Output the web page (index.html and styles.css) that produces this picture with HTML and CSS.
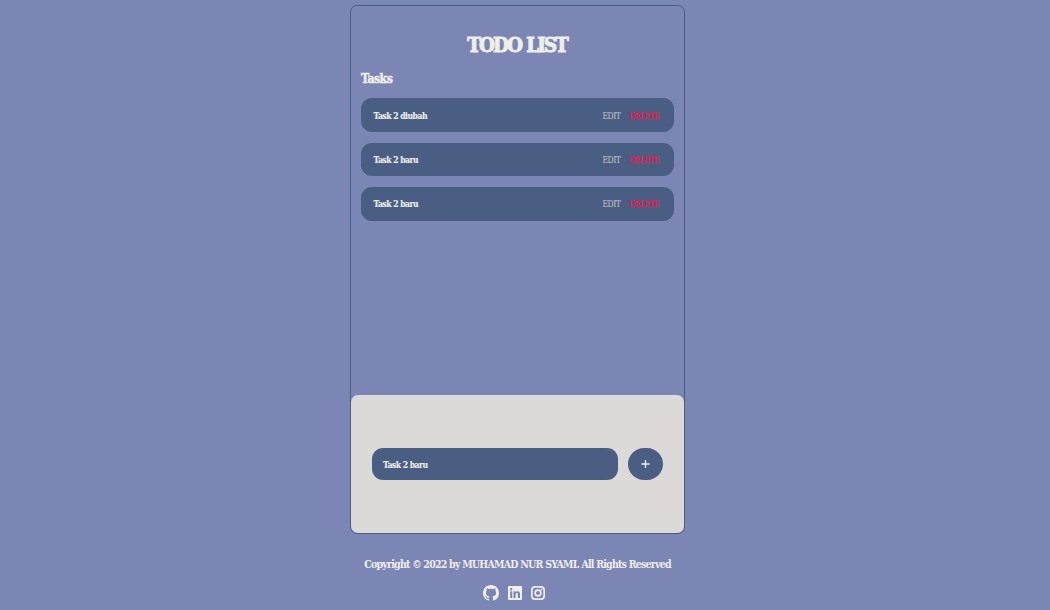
FILE: index.html
```html
<!DOCTYPE html>
<html lang="en">
<head>
<meta charset="utf-8">
<title>Todo List</title>
<link rel="stylesheet" href="styles.css">
</head>
<body>
<main class="app">
  <section class="content">
    <h1 class="title">TODO LIST</h1>
    <h2 class="subtitle">Tasks</h2>
    <ul class="tasks">
      <li class="task"><span class="name">Task 2 diubah</span><span class="edit">EDIT</span><span class="delete">DELETE</span></li>
      <li class="task"><span class="name">Task 2 baru</span><span class="edit">EDIT</span><span class="delete">DELETE</span></li>
      <li class="task"><span class="name">Task 2 baru</span><span class="edit">EDIT</span><span class="delete">DELETE</span></li>
    </ul>
  </section>
  <form class="panel">
    <div class="field"><span class="name">Task 2 baru</span></div>
    <button class="add" type="button" aria-label="Add task"><svg width="9" height="9" viewBox="0 0 9 9"><path d="M0.500 4h8M4.500 0v8" stroke="#efeee9" stroke-width="1.300"/></svg></button>
  </form>
</main>
<footer class="footer">
  <p class="copyright">Copyright © 2022 by MUHAMAD NUR SYAMI. All Rights Reserved</p>
  <div class="social">
    <svg class="github" viewBox="0 0 16 16"><path d="M8 0C3.58 0 0 3.58 0 8c0 3.54 2.29 6.53 5.47 7.59.4.07.55-.17.55-.38 0-.19-.01-.82-.01-1.49-2.01.37-2.53-.49-2.69-.94-.09-.23-.48-.94-.82-1.13-.28-.15-.68-.52-.01-.53.63-.01 1.08.58 1.23.82.72 1.21 1.87.87 2.33.66.07-.52.28-.87.51-1.07-1.78-.2-3.64-.89-3.64-3.95 0-.87.31-1.59.82-2.15-.08-.2-.36-1.02.08-2.12 0 0 .67-.21 2.2.82.64-.18 1.32-.27 2-.27s1.36.09 2 .27c1.53-1.04 2.2-.82 2.2-.82.44 1.1.16 1.92.08 2.12.51.56.82 1.27.82 2.15 0 3.07-1.87 3.75-3.65 3.95.29.25.54.73.54 1.48 0 1.07-.01 1.93-.01 2.2 0 .21.15.46.55.38A8.01 8.01 0 0 0 16 8c0-4.42-3.58-8-8-8z"/></svg>
    <svg class="linkedin" viewBox="0 0 448 448"><path d="M416 0H31.900C14.300 0 0 14.500 0 32.300v383.400C0 433.500 14.300 448 31.900 448H416c17.600 0 32-14.500 32-32.300V32.300C448 14.500 433.600 0 416 0zM135.400 384H69V170.200h66.500V384zm-33.200-243c-21.300 0-38.500-17.300-38.500-38.500S80.900 64 102.200 64c21.200 0 38.500 17.300 38.500 38.500 0 21.300-17.200 38.500-38.500 38.500zm282.100 243h-66.400V280c0-24.800-.5-56.700-34.500-56.700-34.600 0-39.900 27-39.900 54.900V384h-66.400V170.200h63.700v29.200h.9c8.900-16.800 30.600-34.500 62.900-34.500 67.200 0 79.700 44.300 79.700 101.900V384z"/></svg>
    <svg class="instagram" viewBox="0 0 24 24"><g fill="none" stroke="#efeee9" stroke-width="2.900"><rect x="1.450" y="1.450" width="21.100" height="21.100" rx="5.500"/><circle cx="12" cy="12" r="4.900"/></g><circle cx="18.300" cy="5.700" r="1.600"/></svg>
  </div>
</footer>
</body>
</html>
```
FILE: styles.css
```css
* { box-sizing: border-box; }
html { background: #7b86b5; }
body {
  margin: 0;
  width: 1035px;
  height: 610px;
  overflow: hidden;
  padding-top: 5px;
  background: #7b86b5;
  color: #efeee9;
  font-family: "DejaVu Serif Condensed", "DejaVu Serif", serif;
  font-weight: bold;
}
h1, h2, p, ul { margin: 0; padding: 0; }
.app {
  display: flex;
  flex-direction: column;
  width: 335px;
  height: 529px;
  margin: 0 auto;
  border: 1px solid #4a5d83;
  border-radius: 7px;
}
.content { flex: 1; padding: 24px 10px 0; }
.title { height: 30px; padding-right: 1px; text-align: center; font-size: 20.500px; line-height: 30px; letter-spacing: -2.050px; word-spacing: 1px; white-space: nowrap; -webkit-text-stroke: 0.900px #efeee9; }
.subtitle { height: 18px; margin-top: 10px; font-size: 12px; line-height: 18px; letter-spacing: -0.450px; -webkit-text-stroke: 0.500px #efeee9; }
.tasks { display: flex; flex-direction: column; gap: 11px; margin-top: 10px; list-style: none; }
.task {
  display: flex;
  align-items: flex-start;
  height: 34px;
  padding: 12px 15px 0 12.500px;
  border-radius: 11px;
  background: #4a5d83;
  white-space: nowrap;
}
.task:nth-child(2) { height: 33px; padding-top: 11px; }
.task:nth-child(3) { padding-top: 11px; }
.name { flex: 1; font-size: 8.500px; line-height: 12px; letter-spacing: -0.480px; -webkit-text-stroke: 0.150px #efeee9; }
.edit, .delete { font-size: 8.500px; line-height: 12px; font-weight: normal; letter-spacing: -0.500px; }
.edit { width: 27px; color: #b9bcc0; -webkit-text-stroke: 0.150px #b9bcc0; }
.delete { width: 29.500px; color: #e31b50; letter-spacing: -0.620px; -webkit-text-stroke: 0.250px #e31b50; }
.panel {
  display: flex;
  align-items: center;
  gap: 10px;
  height: 138px;
  padding: 0 21px;
  border-radius: 7px;
  background: #dbdad8;
}
.field { display: flex; align-items: center; width: 246px; height: 32px; padding: 1px 11px 0; border-radius: 11px; background: #4a5d83; }
.add { display: flex; align-items: center; justify-content: center; width: 35px; height: 32px; padding: 0; border: 0; border-radius: 16px; background: #4a5d83; }
.footer { padding-top: 22px; }
.copyright { text-align: center; font-size: 10.500px; line-height: 16px; letter-spacing: -0.770px; white-space: nowrap; }
.social { display: flex; align-items: center; height: 16px; margin: 13px 0 0 483px; fill: #efeee9; }
.github { width: 16px; height: 16px; margin-right: 9px; }
.linkedin, .instagram { width: 14px; height: 14px; }
.instagram { margin-left: 9px; }
```
